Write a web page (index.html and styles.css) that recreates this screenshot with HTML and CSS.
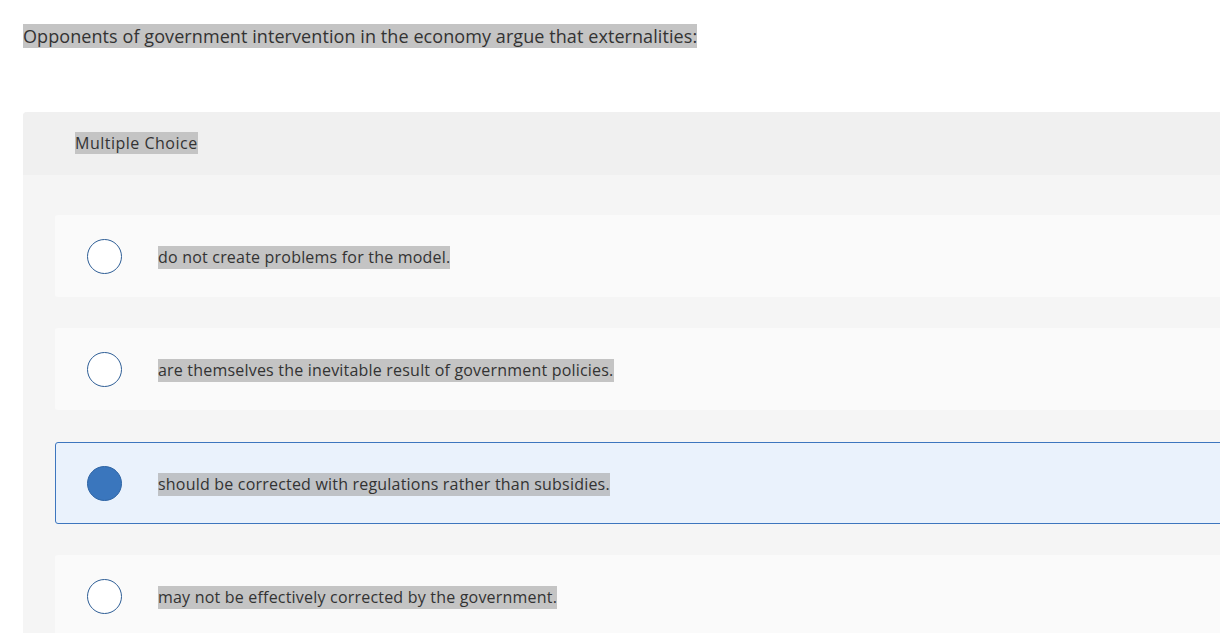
FILE: index.html
```html
<!DOCTYPE html>
<html>
<head>
<meta charset="utf-8">
<link rel="stylesheet" href="styles.css">
</head>
<body>
<div class="page">
  <p class="question"><span class="hl">Opponents of government intervention in the economy argue that externalities:</span></p>
  <div class="panel">
    <div class="panel-head"><span class="hl">Multiple Choice</span></div>
    <div class="options">
      <div class="option">
        <span class="radio"></span>
        <span class="opt-text hl">do not create problems for the model.</span>
      </div>
      <div class="option">
        <span class="radio"></span>
        <span class="opt-text hl">are themselves the inevitable result of government policies.</span>
      </div>
      <div class="option selected">
        <span class="radio"></span>
        <span class="opt-text hl">should be corrected with regulations rather than subsidies.</span>
      </div>
      <div class="option">
        <span class="radio"></span>
        <span class="opt-text hl">may not be effectively corrected by the government.</span>
      </div>
    </div>
  </div>
</div>
</body>
</html>
```

FILE: styles.css
```css
html, body {
  margin: 0;
  padding: 0;
  background: #ffffff;
  overflow: hidden;
}
body {
  font-family: "Open Sans", Lato, "Liberation Sans", sans-serif;
  color: #333333;
}
.page {
  padding: 23px 0 0 23px;
}
.hl {
  background: #c4c4c4;
}
.question {
  margin: 0;
  font-size: 18px;
  letter-spacing: 0.08px;
  line-height: 27px;
  height: 27px;
}
.panel {
  margin-top: 62px;
  width: 1220px;
  border-top-left-radius: 4px;
  background: #f5f5f5;
}
.panel-head {
  height: 63px;
  background: #f0f0f0;
  border-top-left-radius: 4px;
  padding-left: 52px;
  box-sizing: border-box;
  padding-top: 22px;
  font-size: 16px;
  letter-spacing: 0.5px;
  line-height: 19px;
}
.options {
  padding: 40px 0 0 32px;
  display: flex;
  flex-direction: column;
  gap: 31px;
}
.option {
  height: 82px;
  background: #fafafa;
  border-radius: 3px;
  display: flex;
  align-items: center;
  padding-left: 31px;
  box-sizing: border-box;
  border: 1px solid transparent;
}
.option.selected {
  background: #eaf2fc;
  border-color: #3d76be;
  margin-top: 1px;
}
.radio {
  width: 33px;
  height: 33px;
  border-radius: 50%;
  border: 1.5px solid #2e5e96;
  background: #ffffff;
  flex: none;
}
.option.selected .radio {
  background: #3a76bd;
  border-color: #2e64a4;
}
.opt-text {
  margin-left: 36px;
  font-size: 16px;
  letter-spacing: 0.2px;
  line-height: 23px;
  position: relative;
  top: 1px;
}
.option.selected .opt-text {
  background: #bfc2c6;
}
```
